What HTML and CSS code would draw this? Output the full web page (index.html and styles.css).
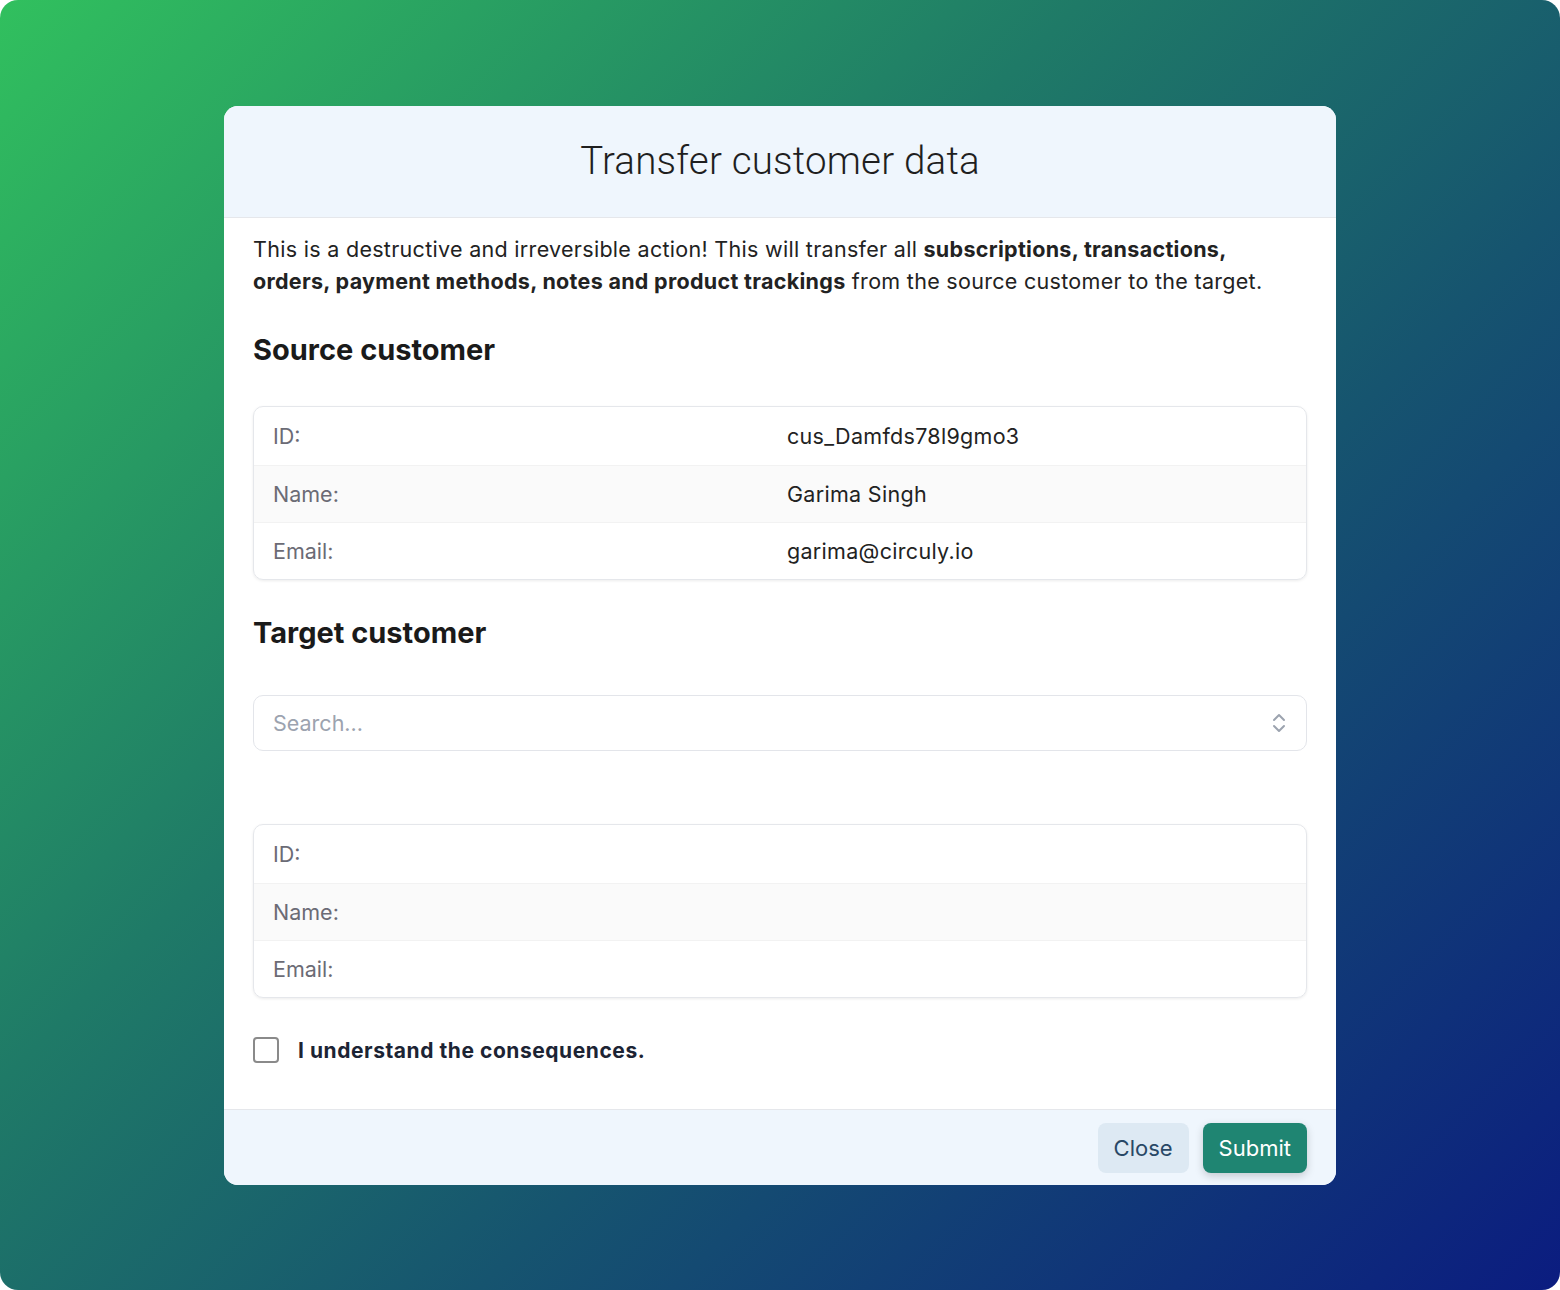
FILE: index.html
```html
<!DOCTYPE html>
<html lang="en">
<head>
  <meta charset="UTF-8" />
  <meta name="viewport" content="width=device-width, initial-scale=1.0">
  <title>Transfer customer data</title>
  <link rel="stylesheet" href="styles.css">
</head>
<body>

  <div class="backdrop">
    <div class="modal">

      <!-- Header -->
      <div class="modal-header">
        <h1>Transfer customer data</h1>
      </div>

      <div class="modal-body">
        <p class="warning">
          This is a destructive and irreversible action! This will transfer all <b>subscriptions, transactions,</b><br>
          <b>orders, payment methods, notes and product trackings</b> from the source customer to the target.
        </p>

        <h2>Source customer</h2>
        <div class="info-card">
          <div class="info-row">
            <span class="info-label">ID:</span>
            <span class="info-value">cus_Damfds78l9gmo3</span>
          </div>
          <div class="info-row">
            <span class="info-label">Name:</span>
            <span class="info-value">Garima Singh</span>
          </div>
          <div class="info-row">
            <span class="info-label">Email:</span>
            <span class="info-value">garima@circuly.io</span>
          </div>
        </div>

        <h2>Target customer</h2>
        <div class="search-box">
          <input type="text" placeholder="Search...">
          <svg class="chevrons" width="16" height="24" viewBox="0 0 16 24">
            <path d="M3 9 L8 4 L13 9" fill="none" stroke="#9ca3af" stroke-width="2" stroke-linecap="round" stroke-linejoin="round" />
            <path d="M3 15 L8 20 L13 15" fill="none" stroke="#9ca3af" stroke-width="2" stroke-linecap="round" stroke-linejoin="round" />
          </svg>
        </div>

        <div class="info-card target-card">
          <div class="info-row">
            <span class="info-label">ID:</span>
            <span class="info-value"></span>
          </div>
          <div class="info-row">
            <span class="info-label">Name:</span>
            <span class="info-value"></span>
          </div>
          <div class="info-row">
            <span class="info-label">Email:</span>
            <span class="info-value"></span>
          </div>
        </div>

        <label class="confirm">
          <span class="checkbox"></span>
          I understand the consequences.
        </label>
      </div>

      <!-- Footer -->
      <div class="modal-footer">
        <button class="btn-close">Close</button>
        <button class="btn-submit">Submit</button>
      </div>

    </div>
  </div>

</body>
</html>
```

FILE: styles.css
```css
body {
  margin: 0;
  background: #fff;
  font-family: 'Inter', 'Roboto', sans-serif;
  color: #222;
}
.backdrop {
  width: 1560px;
  height: 1290px;
  border-radius: 18px;
  background: linear-gradient(135deg, #31c05e 0%, #1f7a67 38%, #16546f 62%, #0b1c80 100%);
  padding-top: 106px;
  box-sizing: border-box;
}
.modal {
  width: 1112px;
  margin: 0 auto;
  background: #fff;
  border-radius: 14px;
  overflow: hidden;
}
.modal-header {
  background: #eff6fd;
  height: 112px;
  border-bottom: 1px solid #e5e7eb;
  box-sizing: border-box;
  display: flex;
  align-items: center;
  justify-content: center;
}
.modal-header h1 {
  margin: 0 0 2px 0;
  font-family: 'Roboto', sans-serif;
  font-weight: 300;
  font-size: 38.5px;
  color: #1f1f1f;
  letter-spacing: 0.2px;
}
.modal-body {
  padding: 15px 29px 46px 29px;
}
.warning {
  margin: 0;
  font-size: 21.5px;
  line-height: 32px;
  letter-spacing: 0.3px;
  color: #222;
  white-space: nowrap;
}
.warning b {
  font-weight: 700;
}
h2 {
  font-size: 29px;
  font-weight: 700;
  line-height: 36px;
  margin: 35px 0 38px 0;
  color: #1a1a1a;
}
.info-card {
  border: 1px solid #e5e7eb;
  border-radius: 10px;
  box-shadow: 0 1px 3px rgba(0, 0, 0, 0.08);
  overflow: hidden;
}
.info-row {
  display: grid;
  grid-template-columns: 533px 1fr;
  height: 57px;
  box-sizing: border-box;
  align-items: center;
  font-size: 21.5px;
  border-top: 1px solid #f2f2f2;
}
.info-row:first-child {
  border-top: none;
  height: 58px;
}
.info-row:nth-child(2) {
  background: #fafafa;
}
.info-label {
  padding-left: 19px;
  color: #6b6b75;
}
.info-value {
  color: #222;
  letter-spacing: 0.3px;
}
.search-box {
  margin-top: 44px;
  height: 56px;
  border: 1px solid #e3e5ea;
  border-radius: 10px;
  display: flex;
  align-items: center;
  padding: 0 19px;
  box-sizing: border-box;
}
.search-box input {
  flex: 1;
  border: none;
  outline: none;
  font-family: 'Inter', sans-serif;
  font-size: 21.5px;
  color: #222;
  padding: 0;
  background: transparent;
}
.search-box input::placeholder {
  color: #9ca3af;
}
.target-card {
  margin-top: 73px;
}
.confirm {
  display: flex;
  align-items: center;
  gap: 19px;
  margin-top: 39px;
  font-weight: 700;
  font-size: 21px;
  letter-spacing: 0.55px;
  color: #1c2434;
}
.checkbox {
  width: 22px;
  height: 22px;
  border: 2px solid #8a8a8a;
  border-radius: 4px;
}
.modal-footer {
  background: #eff6fd;
  border-top: 1px solid #e5e7eb;
  height: 76px;
  box-sizing: border-box;
  display: flex;
  align-items: center;
  justify-content: flex-end;
  gap: 14px;
  padding: 0 29px 0 0;
}
.modal-footer button {
  height: 50px;
  border: none;
  border-radius: 8px;
  font-family: 'Inter', sans-serif;
  font-size: 22px;
  padding: 0 16px;
  cursor: pointer;
}
.btn-close {
  background: #dde9f3;
  color: #294866;
}
.btn-submit {
  background: #1f8572;
  color: #fff;
  box-shadow: 0 3px 8px rgba(0, 0, 0, 0.18);
}
```
